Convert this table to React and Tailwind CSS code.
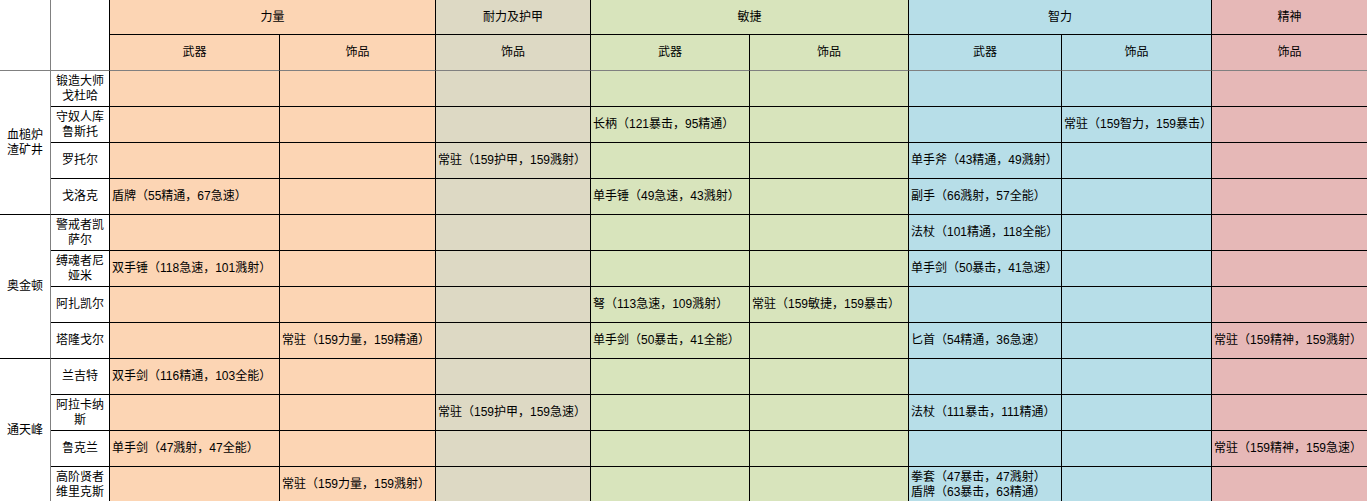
import React from 'react';

const colBg = [
  'bg-[#fcd5b4]',
  'bg-[#fcd5b4]',
  'bg-[#ddd9c4]',
  'bg-[#d8e4bc]',
  'bg-[#d8e4bc]',
  'bg-[#b7dee8]',
  'bg-[#b7dee8]',
  'bg-[#e6b8b7]',
];

const groups = [
  { title: '力量', span: 'col-span-2', bg: 'bg-[#fcd5b4]' },
  { title: '耐力及护甲', span: 'col-span-1', bg: 'bg-[#ddd9c4]' },
  { title: '敏捷', span: 'col-span-2', bg: 'bg-[#d8e4bc]' },
  { title: '智力', span: 'col-span-2', bg: 'bg-[#b7dee8]' },
  { title: '精神', span: 'col-span-1', bg: 'bg-[#e6b8b7]', last: true },
];

const subs = ['武器', '饰品', '饰品', '武器', '饰品', '武器', '饰品', '饰品'];

// cells: [力武, 力饰, 耐饰, 敏武, 敏饰, 智武, 智饰, 精饰]
const regions = [
  {
    name: '血槌炉渣矿井',
    bosses: [
      { name: '锻造大师戈杜哈', cells: [] },
      { name: '守奴人库鲁斯托', cells: { 3: '长柄（121暴击，95精通）', 6: '常驻（159智力，159暴击）' } },
      { name: '罗托尔', cells: { 2: '常驻（159护甲，159溅射）', 5: '单手斧（43精通，49溅射）' } },
      { name: '戈洛克', cells: { 0: '盾牌（55精通，67急速）', 3: '单手锤（49急速，43溅射）', 5: '副手（66溅射，57全能）' } },
    ],
  },
  {
    name: '奥金顿',
    bosses: [
      { name: '警戒者凯萨尔', cells: { 5: '法杖（101精通，118全能）' } },
      { name: '缚魂者尼娅米', cells: { 0: '双手锤（118急速，101溅射）', 5: '单手剑（50暴击，41急速）' } },
      { name: '阿扎凯尔', cells: { 3: '弩（113急速，109溅射）', 4: '常驻（159敏捷，159暴击）' } },
      {
        name: '塔隆戈尔',
        cells: {
          1: '常驻（159力量，159精通）',
          3: '单手剑（50暴击，41全能）',
          5: '匕首（54精通，36急速）',
          7: '常驻（159精神，159溅射）',
        },
      },
    ],
  },
  {
    name: '通天峰',
    bosses: [
      { name: '兰吉特', cells: { 0: '双手剑（116精通，103全能）' } },
      { name: '阿拉卡纳斯', cells: { 2: '常驻（159护甲，159急速）', 5: '法杖（111暴击，111精通）' } },
      { name: '鲁克兰', cells: { 0: '单手剑（47溅射，47全能）', 7: '常驻（159精神，159急速）' } },
      {
        name: '高阶贤者维里克斯',
        cells: { 1: '常驻（159力量，159溅射）', 5: ['拳套（47暴击，47溅射）', '盾牌（63暴击，63精通）'] },
      },
    ],
  },
];

const App = () => {
  return (
    <div
      className="h-[501px] w-[1367px] overflow-hidden bg-white text-[12px] leading-[15px] text-black"
      style={{ fontFamily: '"Liberation Sans", "Noto Sans CJK SC", sans-serif' }}
    >
      <div className="grid grid-cols-[51px_59px_170px_156px_155px_159px_159px_153px_150px_155px] grid-rows-[35px_36px_repeat(12,36px)]">
        {/* header */}
        <div className="row-span-2 border-r border-b border-r-[#808080] border-b-[#808080] bg-white"></div>
        <div className="row-span-2 border-r border-b border-r-black border-b-[#808080] bg-white"></div>
        {groups.map((g) => (
          <div
            key={g.title}
            className={`${g.span} ${g.bg} flex items-center justify-center border-b border-black ${g.last ? '' : 'border-r'}`}
          >
            {g.title}
          </div>
        ))}
        {subs.map((s, i) => (
          <div
            key={i}
            className={`${colBg[i]} flex items-center justify-center border-b border-b-[#808080] border-r-black ${i === 7 ? '' : 'border-r'}`}
          >
            {s}
          </div>
        ))}

        {/* body */}
        {regions.map((r) => (
          <React.Fragment key={r.name}>
            <div className="row-span-4 flex items-center justify-center border-r border-b border-r-[#808080] border-b-black px-1 text-center">
              {r.name}
            </div>
            {r.bosses.map((b, bi) => (
              <React.Fragment key={b.name}>
                <div
                  className={`flex items-center justify-center border-r border-b border-black px-1 text-center ${bi > 0 ? 'col-start-2' : ''}`}
                >
                  {b.name}
                </div>
                {colBg.map((bg, ci) => {
                  const v = b.cells[ci];
                  return (
                    <div
                      key={ci}
                      className={`${bg} flex flex-col justify-center border-b border-black pl-[2px] whitespace-nowrap ${ci === 7 ? '' : 'border-r'}`}
                    >
                      {Array.isArray(v) ? v.map((line) => <div key={line}>{line}</div>) : v}
                    </div>
                  );
                })}
              </React.Fragment>
            ))}
          </React.Fragment>
        ))}
      </div>
    </div>
  );
};

export default App;
